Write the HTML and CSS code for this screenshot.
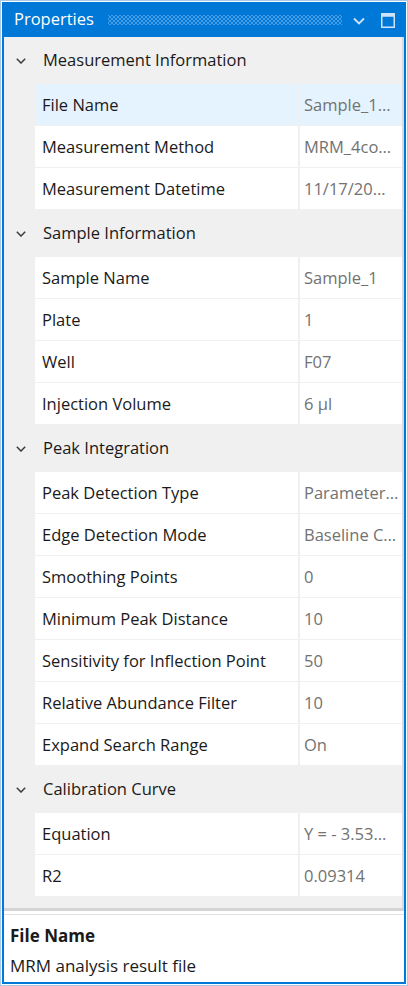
FILE: index.html
```html
<!DOCTYPE html>
<html lang="en">
<head>
<meta charset="utf-8">
<title>Properties</title>
<link rel="stylesheet" href="styles.css">
</head>
<body>
<div class="frame">
  <div class="panel">
    <div class="titlebar">
      <span class="title">Properties</span>
      <span class="grip"></span>
      <svg class="tb-icon tb-chev" width="12" height="8" viewBox="0 0 12 8"><path d="M1 1.5 L6 6.5 L11 1.5" fill="none" stroke="#cfe4f8" stroke-width="1.8"/></svg>
      <svg class="tb-icon tb-max" width="14" height="15" viewBox="0 0 14 15"><rect x="0.75" y="0.75" width="12.5" height="13.5" fill="none" stroke="#cfe4f8" stroke-width="1.5"/><rect x="0.75" y="0.75" width="12.5" height="3" fill="#cfe4f8"/></svg>
    </div>
    <div class="grid">
      <div class="cat">
        <div class="cat-head"><svg class="chev" width="10" height="6" viewBox="0 0 10 6"><path d="M0.8 0.8 L5 5 L9.2 0.8" fill="none" stroke="#3c3c3c" stroke-width="1.5"/></svg><span>Measurement Information</span></div>
        <div class="prop selected"><div class="name">File Name</div><div class="value">Sample_1…</div></div>
        <div class="prop"><div class="name">Measurement Method</div><div class="value">MRM_4co…</div></div>
        <div class="prop"><div class="name">Measurement Datetime</div><div class="value">11/17/20…</div></div>
      </div>
      <div class="cat">
        <div class="cat-head"><svg class="chev" width="10" height="6" viewBox="0 0 10 6"><path d="M0.8 0.8 L5 5 L9.2 0.8" fill="none" stroke="#3c3c3c" stroke-width="1.5"/></svg><span>Sample Information</span></div>
        <div class="prop"><div class="name">Sample Name</div><div class="value">Sample_1</div></div>
        <div class="prop"><div class="name">Plate</div><div class="value">1</div></div>
        <div class="prop"><div class="name">Well</div><div class="value">F07</div></div>
        <div class="prop"><div class="name">Injection Volume</div><div class="value">6 µl</div></div>
      </div>
      <div class="cat">
        <div class="cat-head"><svg class="chev" width="10" height="6" viewBox="0 0 10 6"><path d="M0.8 0.8 L5 5 L9.2 0.8" fill="none" stroke="#3c3c3c" stroke-width="1.5"/></svg><span>Peak Integration</span></div>
        <div class="prop"><div class="name">Peak Detection Type</div><div class="value">Parameter…</div></div>
        <div class="prop"><div class="name">Edge Detection Mode</div><div class="value">Baseline C…</div></div>
        <div class="prop"><div class="name">Smoothing Points</div><div class="value">0</div></div>
        <div class="prop"><div class="name">Minimum Peak Distance</div><div class="value">10</div></div>
        <div class="prop"><div class="name">Sensitivity for Inflection Point</div><div class="value">50</div></div>
        <div class="prop"><div class="name">Relative Abundance Filter</div><div class="value">10</div></div>
        <div class="prop"><div class="name">Expand Search Range</div><div class="value">On</div></div>
      </div>
      <div class="cat">
        <div class="cat-head"><svg class="chev" width="10" height="6" viewBox="0 0 10 6"><path d="M0.8 0.8 L5 5 L9.2 0.8" fill="none" stroke="#3c3c3c" stroke-width="1.5"/></svg><span>Calibration Curve</span></div>
        <div class="prop"><div class="name">Equation</div><div class="value">Y = - 3.53…</div></div>
        <div class="prop"><div class="name">R2</div><div class="value">0.09314</div></div>
      </div>
    </div>
    <div class="splitter"></div>
    <div class="desc">
      <div class="desc-title">File Name</div>
      <div class="desc-text">MRM analysis result file</div>
    </div>
  </div>
</div>
</body>
</html>
```
FILE: styles.css
```css
* { box-sizing: border-box; }
html, body { margin: 0; padding: 0; background: #ffffff; }
body {
  font-family: "Open Sans", "Noto Sans", sans-serif;
  font-size: 16.5px;
  color: #1a1a1a;
}
.frame {
  width: 408px;
  height: 986px;
  border: 1px solid #a9c9e9;
  padding: 1px;
  background: #ffffff;
}
.panel {
  height: 100%;
  display: flex;
  flex-direction: column;
  border: 2px solid #0078d7;
  border-top: 0;
  background: #f0f0f0;
}
.titlebar {
  height: 35px;
  flex: none;
  background: #0078d7;
  display: flex;
  align-items: center;
  margin: 0 -2px;
  padding: 0 11px 0 12px;
}
.title {
  color: #ffffff;
  font-size: 16.5px;
  line-height: 1;
  padding-bottom: 1px;
}
.grip {
  flex: 1;
  height: 10px;
  margin: 1px 11px 0 14px;
  background-image:
    radial-gradient(circle, #5fa8ea 0.6px, transparent 1px),
    radial-gradient(circle, #5fa8ea 0.6px, transparent 1px);
  background-size: 4px 4px, 4px 4px;
  background-position: 0 0, 2px 2px;
}
.tb-icon { flex: none; display: block; }
.tb-chev { margin: 2px 16px 0 0; }
.tb-max { margin-top: 1px; }
.grid {
  flex: none;
  height: 871px;
  border-right: 2px solid #dadada;
  padding-bottom: 11px;
}
.cat-head {
  height: 47px;
  display: flex;
  align-items: center;
  padding-left: 12px;
}
.chev { display: block; flex: none; margin-right: 17px; margin-top: 1px; }
.cat-head span { line-height: 1; }
.prop {
  height: 42px;
  margin-left: 31px;
  display: grid;
  grid-template-columns: 265px 1fr;
  border-bottom: 1px solid #f0f0f0;
  background: #ffffff;
}
.prop.selected { background: #e5f3ff; }
.name, .value {
  display: flex;
  align-items: center;
  white-space: nowrap;
  overflow: hidden;
}
.name {
  padding-left: 7px;
  border-right: 2px solid #f0f0f0;
}
.value {
  padding-left: 4px;
  color: #727272;
}
.splitter {
  flex: none;
  height: 7px;
  border-top: 3px solid #d4d4d4;
  border-bottom: 1px solid #e2e2e2;
  background: #ffffff;
}
.desc {
  flex: 1;
  background: #ffffff;
  padding: 7px 0 0 6px;
  font-size: 17px;
}
.desc-title {
  font-weight: 700;
  height: 30px;
  line-height: 28px;
}
.desc-text {
  line-height: 28px;
}
```
